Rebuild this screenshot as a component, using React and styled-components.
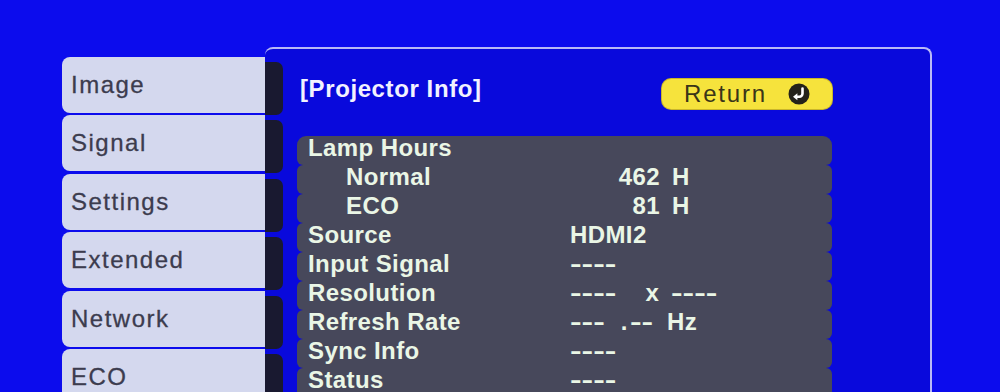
import React from 'react'
import styled, { createGlobalStyle } from 'styled-components';

const GlobalStyle = createGlobalStyle`
  html, body {
    margin: 0;
    padding: 0;
    background: #0c0ced;
    overflow: hidden;
  }
  body {
    font-family: "Liberation Sans", Arial, sans-serif;
  }
`;

const tabs = ["Image", "Signal", "Settings", "Extended", "Network", "ECO"];

const App = () => {
  return (
    <>
      <GlobalStyle />
      <Screen>
        <Sidebar>
          {tabs.map(tab => (
            <Tab key={tab}>{tab}</Tab>
          ))}
        </Sidebar>

        <Panel>
          <Connectors>
            {tabs.map(tab => (
              <Connector key={tab} />
            ))}
          </Connectors>

          <Content>
            <Header>
              <Title>[Projector Info]</Title>
              <ReturnButton>
                Return
                <ReturnIcon viewBox="0 0 22 22">
                  <circle cx="11" cy="11" r="10.5" fill="#24221a" />
                  <path d="M14.5 5.5 V10.5 A3.2 3.2 0 0 1 11.3 13.7 H8.5" fill="none" stroke="#fff" strokeWidth="2.6" strokeLinecap="round" />
                  <polygon points="5,13.7 9.4,10.2 9.4,17.2" fill="#fff" />
                </ReturnIcon>
              </ReturnButton>
            </Header>

            <InfoList>
              <Row $first>
                <Label>Lamp Hours</Label>
                <Value />
              </Row>
              <Row>
                <Label $indent>Normal</Label>
                <Value><Num>462</Num><Seg $ml={12}>H</Seg></Value>
              </Row>
              <Row>
                <Label $indent>ECO</Label>
                <Value><Num>81</Num><Seg $ml={12}>H</Seg></Value>
              </Row>
              <Row>
                <Label>Source</Label>
                <Value>HDMI2</Value>
              </Row>
              <Row>
                <Label>Input Signal</Label>
                <Value><Dash $n={4}>----</Dash></Value>
              </Row>
              <Row>
                <Label>Resolution</Label>
                <Value>
                  <Dash $n={4}>----</Dash>
                  <Seg $ml={29}>x</Seg>
                  <Dash $n={4} $ml={12}>----</Dash>
                </Value>
              </Row>
              <Row>
                <Label>Refresh Rate</Label>
                <Value>
                  <Dash $n={3}>---</Dash>
                  <Seg $ml={16}>.</Seg>
                  <Dash $n={2} $ml={2}>--</Dash>
                  <Seg $ml={14}>Hz</Seg>
                </Value>
              </Row>
              <Row>
                <Label>Sync Info</Label>
                <Value><Dash $n={4}>----</Dash></Value>
              </Row>
              <Row>
                <Label>Status</Label>
                <Value><Dash $n={4}>----</Dash></Value>
              </Row>
            </InfoList>
          </Content>
        </Panel>
      </Screen>
    </>
  )
}
export default App;

const Screen = styled.div`
  display: flex;
  align-items: flex-start;
  height: 392px;
  padding: 47px 0 0 62px;
  box-sizing: border-box;
  overflow: hidden;
`;

const Sidebar = styled.div`
  display: flex;
  flex-direction: column;
  gap: 2.4px;
  width: 203px;
  margin-top: 10px;
`;

const Tab = styled.div`
  display: flex;
  align-items: center;
  height: 56px;
  padding-left: 9px;
  background: #d4d8ee;
  border-radius: 8px 0 0 8px;
  color: #3c3c4e;
  font-size: 24px;
  letter-spacing: 1.5px;
  -webkit-text-stroke: 0.3px #3c3c4e;
`;

const Panel = styled.div`
  display: flex;
  width: 667px;
  min-height: 420px;
  background: #0909dc;
  border-top: 2px solid #b9b9f6;
  border-right: 2px solid #b9b9f6;
  border-radius: 8px 8px 0 0;
  box-sizing: border-box;
`;

const Connectors = styled.div`
  display: flex;
  flex-direction: column;
  gap: 5.4px;
  width: 18px;
  padding-top: 13px;
`;

const Connector = styled.div`
  height: 53px;
  background: #191930;
  border-radius: 0 7px 7px 0;
`;

const Content = styled.div`
  display: flex;
  flex-direction: column;
  padding-left: 14px;
  width: 535px;
`;

const Header = styled.div`
  display: flex;
  align-items: center;
  justify-content: space-between;
  margin-top: 30px;
  height: 30px;
  margin-bottom: 27px;
`;

const Title = styled.div`
  padding-left: 3px;
  margin-bottom: 10px;
  color: #f2f2ff;
  font-size: 24px;
  font-weight: bold;
  letter-spacing: 0.6px;
`;

const ReturnButton = styled.div`
  display: flex;
  align-items: center;
  gap: 21px;
  width: 170px;
  height: 30px;
  padding-left: 22px;
  box-sizing: border-box;
  background: #f6e33c;
  border-radius: 9px;
  box-shadow: 0 0 0 1px #c9b52a;
  color: #3a3518;
  font-size: 24px;
  letter-spacing: 1.8px;
`;

const ReturnIcon = styled.svg`
  width: 22px;
  height: 22px;
`;

const InfoList = styled.div`
  display: flex;
  flex-direction: column;
`;

const Row = styled.div`
  display: grid;
  grid-template-columns: 262px 1fr;
  height: 29px;
  padding-left: 11px;
  background: #47485b;
  border-radius: ${p => p.$first ? '9px 9px 6px 6px' : '6px'};
  color: #eaf6e6;
  font-size: 24px;
  font-weight: bold;
  line-height: 24px;
  letter-spacing: 0.4px;
  white-space: pre;
`;

const Label = styled.div`
  padding-left: ${p => p.$indent ? '38px' : '0'};
`;

const Value = styled.div`
  display: flex;
`;

const Num = styled.span`
  display: inline-block;
  width: 90px;
  text-align: right;
`;

const Seg = styled.span`
  margin-left: ${p => p.$ml || 0}px;
`;

const Dash = styled.span`
  display: inline-block;
  width: ${p => p.$n * 8}px;
  margin-left: ${p => p.$ml || 0}px;
  margin-right: ${p => p.$n * 3.6}px;
  letter-spacing: 0;
  transform: scaleX(1.45);
  transform-origin: left center;
`;
